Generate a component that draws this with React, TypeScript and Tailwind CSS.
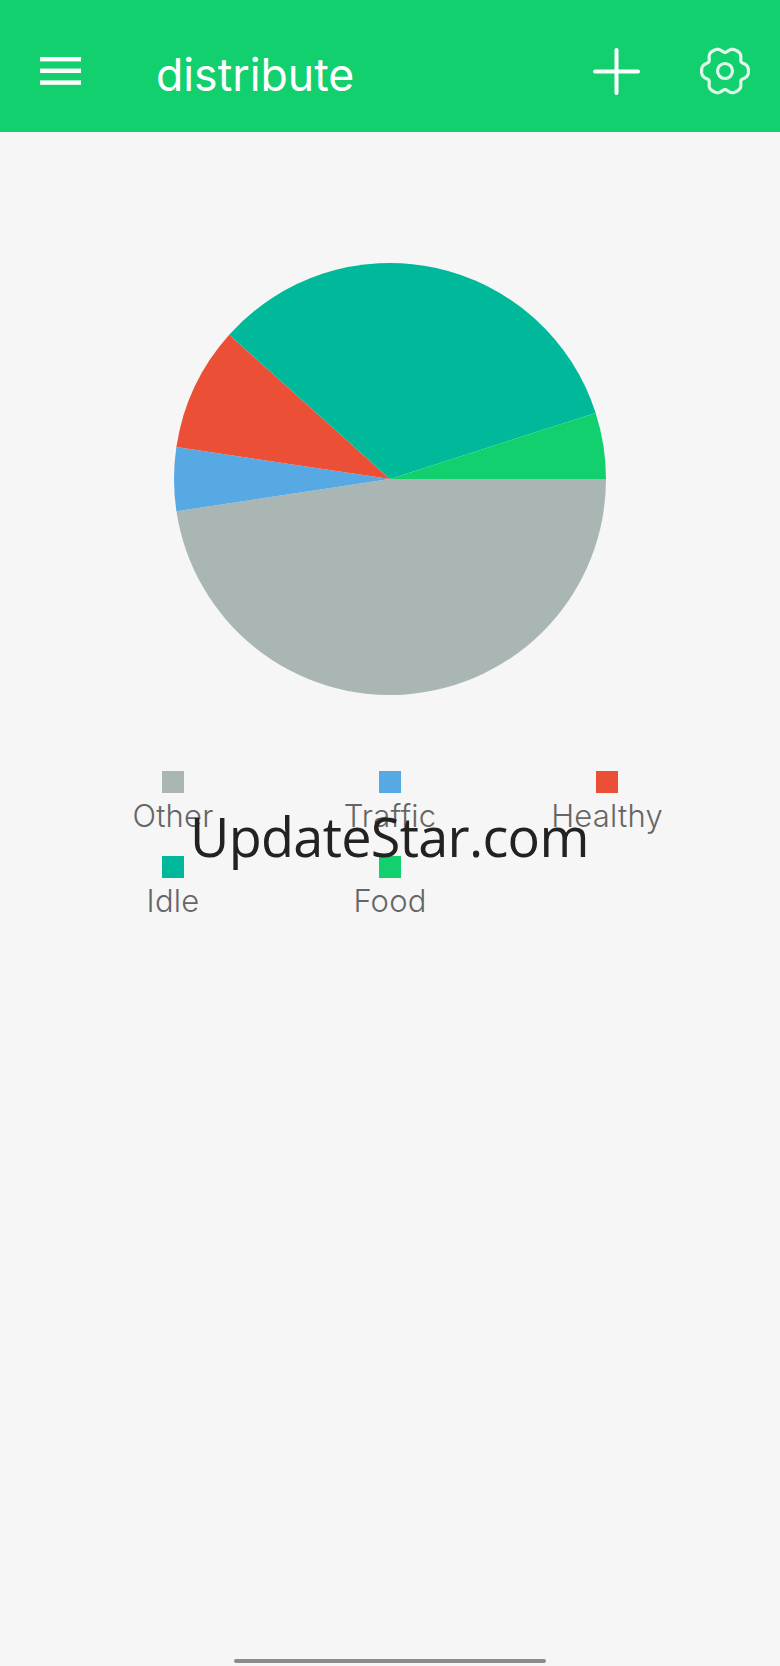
const slices = [
  { color: "#aab6b4", from: 0, to: 171.4 },
  { color: "#56a9e3", from: 171.4, to: 188.5 },
  { color: "#eb5037", from: 188.5, to: 221.9 },
  { color: "#00b99b", from: 221.9, to: 342.2 },
  { color: "#12d06e", from: 342.2, to: 360 },
];

const legend = [
  { label: "Other", color: "bg-[#aab6b4]" },
  { label: "Traffic", color: "bg-[#56a9e3]" },
  { label: "Healthy", color: "bg-[#eb5037]" },
  { label: "Idle", color: "bg-[#00b99b]" },
  { label: "Food", color: "bg-[#12d06e]" },
];

function point(deg: number) {
  const a = (deg * Math.PI) / 180;
  return `${(218 + 216 * Math.cos(a)).toFixed(2)} ${(218 + 216 * Math.sin(a)).toFixed(2)}`;
}

function slicePath(from: number, to: number) {
  return `M218 218 L${point(from)} A216 216 0 0 1 ${point(to)} Z`;
}

// six flat lobes with narrow notches, one notch at top and bottom
function gearPath() {
  const pts: string[] = [];
  for (let i = 0; i < 180; i++) {
    const a = (i / 180) * Math.PI * 2;
    const r = 23.4 - 4.8 * Math.pow((1 - Math.cos(6 * a)) / 2, 2);
    pts.push(`${(25 + r * Math.cos(a)).toFixed(2)} ${(24 + r * Math.sin(a)).toFixed(2)}`);
  }
  return "M" + pts.join(" L") + " Z";
}

export default function App() {
  return (
    <div className="relative flex h-[1666px] w-[780px] flex-col overflow-hidden bg-[#f6f6f6]">
      <header className="flex h-[132px] shrink-0 items-center bg-[#12d06e] pl-10 pr-[30px] text-white">
        <svg width="41" height="28" viewBox="0 0 41 28" className="mt-[10px]" fill="#fff">
          <rect x="0" y="0" width="41" height="4.4" />
          <rect x="0" y="11.6" width="41" height="4.4" />
          <rect x="0" y="23.4" width="41" height="4.4" />
        </svg>
        <h1 className="ml-[75px] mt-[18px] font-['Inter',sans-serif] text-[44.6px] leading-none font-normal">distribute</h1>
        <svg width="47" height="47" viewBox="0 0 47 47" className="ml-auto mt-[10px]" fill="none" stroke="#fff" strokeWidth="4" strokeLinecap="round">
          <path d="M23.5 2 V45 M2 23.5 H45" />
        </svg>
        <svg width="50" height="48" viewBox="0 0 50 48" className="ml-[60px] mt-[10px]" fill="none" stroke="#dff8ea" strokeWidth="3.2">
          <path d={gearPath()} strokeLinejoin="round" />
          <circle cx="25" cy="24" r="7.5" />
        </svg>
      </header>

      <main className="flex flex-col items-center">
        <svg width="436" height="436" viewBox="0 0 436 436" className="mt-[128.7px]">
          {slices.map((s) => (
            <path key={s.color} d={slicePath(s.from, s.to)} fill={s.color} />
          ))}
        </svg>

        <div className="mt-[74.3px] grid w-[651px] grid-cols-3 gap-y-[22px] font-['Inter',sans-serif] text-[31px] leading-[36px] font-light tracking-[0.2px] text-[#666]">
          {legend.map((item) => (
            <div key={item.label} className="flex flex-col items-center">
              <span className={`h-[22px] w-[22px] ${item.color}`} />
              <span className="mt-[5px]">{item.label}</span>
            </div>
          ))}
        </div>
      </main>

      <div className="absolute left-[190px] top-[798px] font-['Open_Sans',sans-serif] text-[54px] leading-[76px] tracking-[-0.7px] text-[#222]">UpdateStar.com</div>

      <div className="mt-auto mb-[3px] h-1 w-[312px] self-center rounded-full bg-[#8c8c8c]" />
    </div>
  );
}
